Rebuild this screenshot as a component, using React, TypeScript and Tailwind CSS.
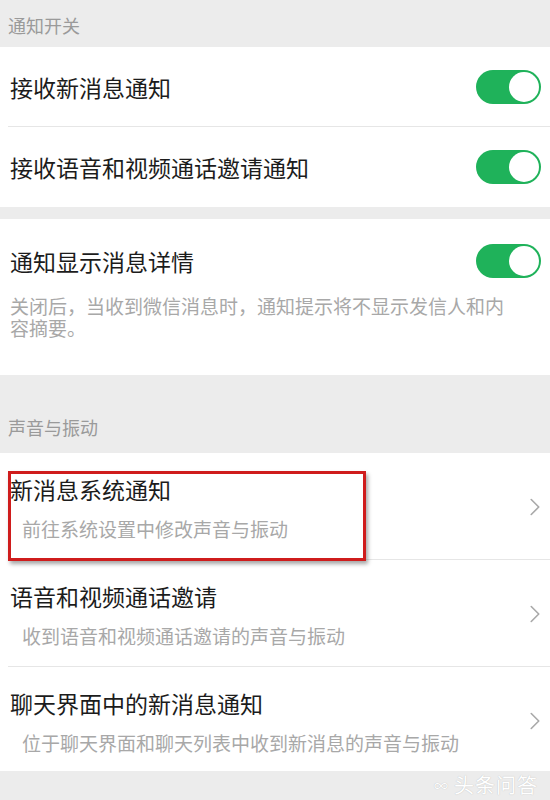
import { ChevronRight } from "lucide-react";

const font = { fontFamily: '"Noto Sans CJK SC", "Noto Sans", sans-serif' };

function Toggle() {
  return (
    <div className="w-[65px] h-[34px] rounded-full bg-[#1fb25a] flex items-center justify-end pr-[2px]">
      <div className="w-[30px] h-[30px] rounded-full bg-white" />
    </div>
  );
}

function SwitchRow({ title, border }: { title: string; border?: boolean }) {
  return (
    <div className="h-[80px] flex items-center justify-between pl-[10px] pr-[9px] relative">
      <span className="text-[23px] text-[#1c1c1c] leading-none">{title}</span>
      <Toggle />
      {border && <div className="absolute left-[8px] right-0 bottom-0 h-px bg-[#e6e6e6]" />}
    </div>
  );
}

function LinkRow({
  title,
  sub,
  h,
  border,
  children,
}: {
  title: string;
  sub: string;
  h: string;
  border?: boolean;
  children?: React.ReactNode;
}) {
  return (
    <div className={`${h} relative flex items-start justify-between pl-[10px] pr-0`}>
      <div className="flex flex-col pt-[21px]">
        <span className="text-[23px] leading-[30px] text-[#1c1c1c]">{title}</span>
        <span className="mt-[12px] pl-[12px] text-[19px] leading-[26px] text-[#a8a8a8]">{sub}</span>
      </div>
      <ChevronRight className="mt-[39px] text-[#a9a9a9]" size={30} strokeWidth={1.3} />
      {border && <div className="absolute left-[8px] right-0 bottom-0 h-px bg-[#e6e6e6]" />}
      {children}
    </div>
  );
}

export default function App() {
  return (
    <div className="w-[550px] h-[800px] bg-[#ececec] overflow-hidden" style={font}>
      <div className="h-[47px] flex items-center pl-[8px] pt-[4px] text-[18px] text-[#9a9a9a]">通知开关</div>
      <div className="bg-white">
        <SwitchRow title="接收新消息通知" border />
        <SwitchRow title="接收语音和视频通话邀请通知" />
      </div>

      <div className="h-[12px]" />

      <div className="bg-white h-[156px] pl-[10px] pr-[9px]">
        <div className="flex items-center justify-between pt-[25px]">
          <span className="text-[23px] text-[#1c1c1c] leading-none">通知显示消息详情</span>
          <Toggle />
        </div>
        <p className="mt-[17px] text-[19px] leading-[22px] text-[#a8a8a8] pr-[24px]">
          关闭后，当收到微信消息时，通知提示将不显示发信人和内容摘要。
        </p>
      </div>

      <div className="h-[78px] flex items-end pl-[8px] pb-[12px] text-[18px] text-[#9a9a9a]">声音与振动</div>

      <div className="bg-white">
        <LinkRow title="新消息系统通知" sub="前往系统设置中修改声音与振动" h="h-[107px]" border>
          <div className="absolute left-[8px] top-[18px] w-[358px] h-[90px] border-[3px] border-[#cf1c1c] shadow-[2px_3px_4px_rgba(0,0,0,0.35)]" />
        </LinkRow>
        <LinkRow title="语音和视频通话邀请" sub="收到语音和视频通话邀请的声音与振动" h="h-[107px]" border />
        <LinkRow title="聊天界面中的新消息通知" sub="位于聊天界面和聊天列表中收到新消息的声音与振动" h="h-[104px]" />
      </div>

      <div className="h-[28px] flex items-center justify-end pr-[12px] gap-[6px] text-white [text-shadow:0_0_1px_rgba(0,0,0,0.25)]">
        <span className="text-[14px] leading-none">∞</span>
        <span className="text-[20px] leading-none tracking-[1px]">头条问答</span>
      </div>
    </div>
  );
}
